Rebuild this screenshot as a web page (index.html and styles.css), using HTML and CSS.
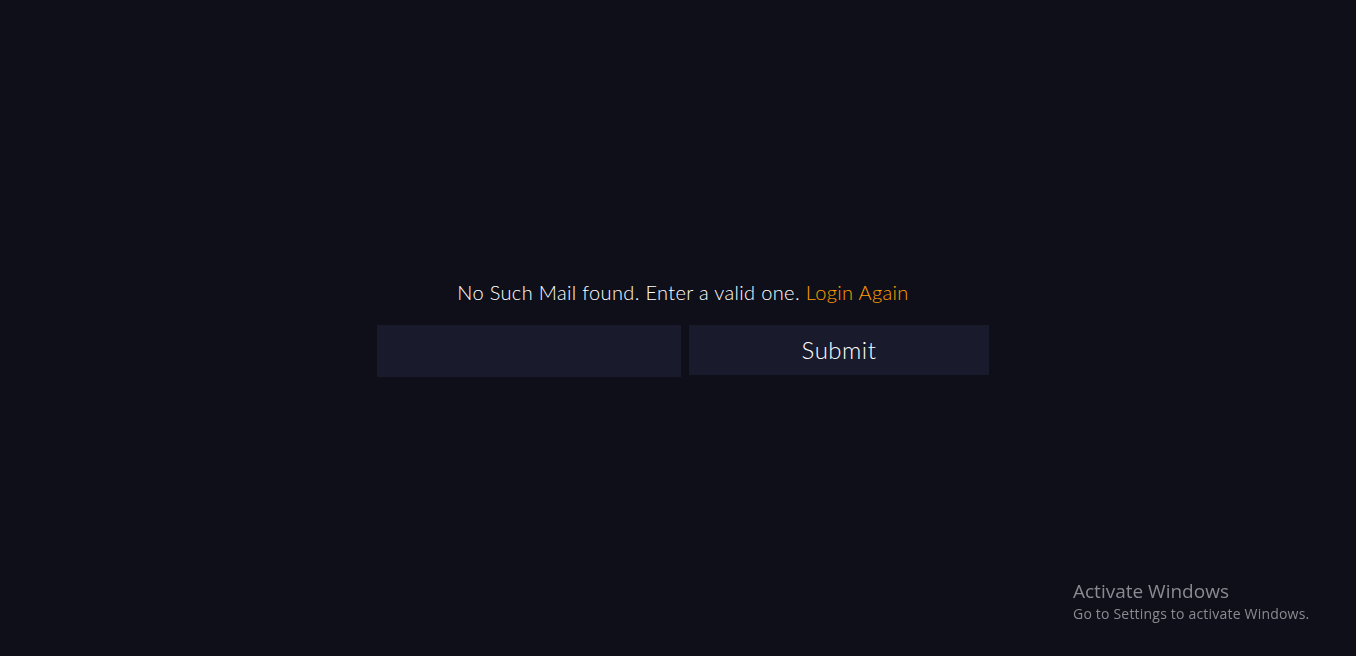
FILE: index.html
```html
<!DOCTYPE html>
<html>
<head>
<meta charset="utf-8">
<link rel="stylesheet" href="styles.css">
</head>
<body>
<main class="page">
  <div class="box">
    <p class="msg">No Such Mail found. Enter a valid one. <a class="link" href="#">Login Again</a></p>
    <form class="row">
      <input class="field" type="text">
      <button class="submit" type="button">Submit</button>
    </form>
  </div>
</main>
<div class="watermark">
  <div class="wm-title">Activate Windows</div>
  <div class="wm-sub">Go to Settings to activate Windows.</div>
</div>
</body>
</html>
```
FILE: styles.css
```css
html, body {
  margin: 0;
  height: 100%;
}
body {
  background: #0f0f19;
  font-family: "Lato", "Open Sans", sans-serif;
  font-weight: 300;
  color: #ffffff;
  overflow: hidden;
}
.page {
  height: 100%;
  display: flex;
  align-items: center;
  justify-content: center;
  padding-left: 10px;
  box-sizing: border-box;
}
.box {
  display: flex;
  flex-direction: column;
  align-items: center;
  margin-top: 0;
}
.msg {
  margin: 0 0 21px 0;
  font-size: 20px;
  line-height: 24px;
  letter-spacing: 0.35px;
}
.link {
  color: #ffa000;
  text-decoration: none;
}
.row {
  display: flex;
  gap: 8px;
  align-items: flex-start;
}
.field {
  width: 304px;
  height: 52px;
  box-sizing: border-box;
  background: #1a1a2d;
  border: none;
  outline: none;
  margin: 0;
  padding: 0 12px;
  color: #fff;
}
.submit {
  width: 300px;
  height: 50px;
  background: #1a1a2d;
  border: none;
  margin: 0;
  color: #ffffff;
  font-family: "Lato", "Open Sans", sans-serif;
  font-weight: 300;
  font-size: 24px;
  letter-spacing: 0.5px;
  cursor: pointer;
}
.watermark {
  position: fixed;
  left: 1073px;
  top: 579px;
  color: #8a8a90;
  font-family: "Open Sans", "Noto Sans", sans-serif;
  font-weight: 400;
}
.wm-title {
  font-size: 19px;
  line-height: 24px;
}
.wm-sub {
  font-size: 14px;
  line-height: 22px;
  letter-spacing: 0.2px;
}
```
